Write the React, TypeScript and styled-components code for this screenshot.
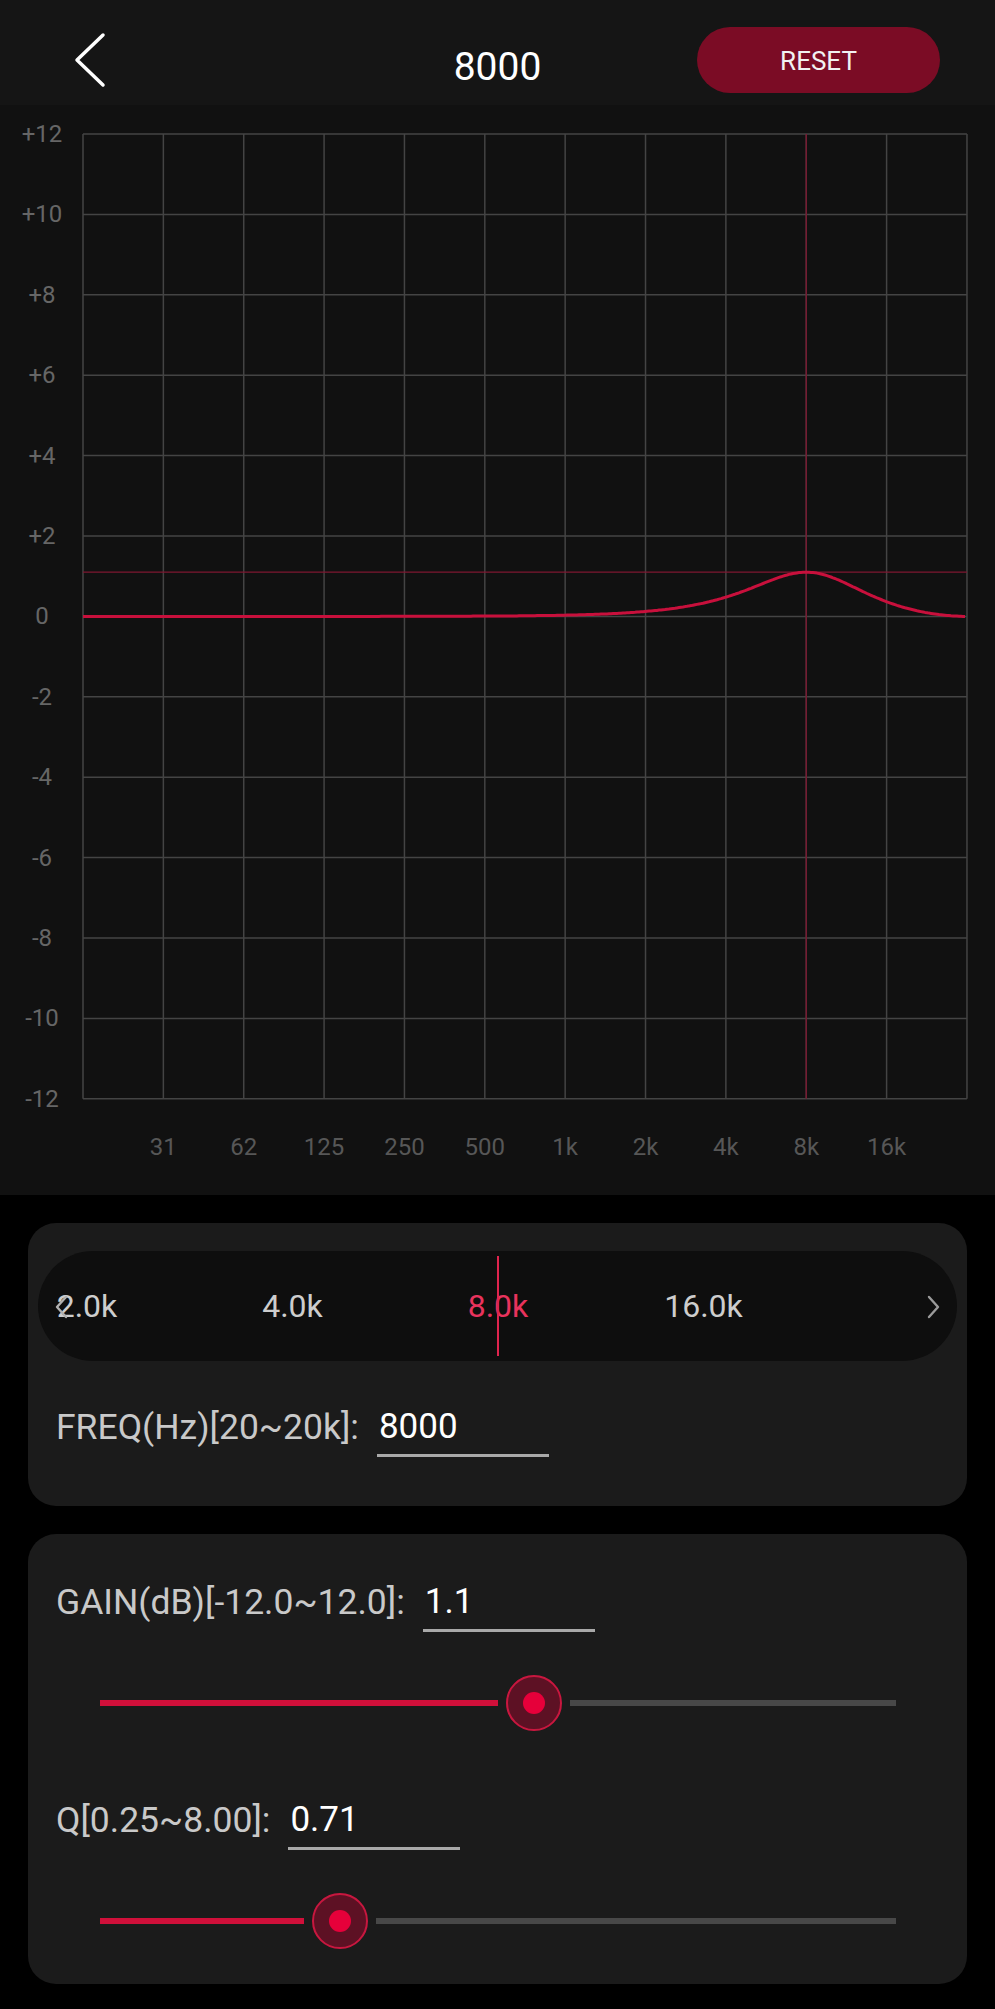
import React from 'react';
import styled, { createGlobalStyle } from 'styled-components';

const GlobalStyle = createGlobalStyle`
  html, body {
    margin: 0;
    padding: 0;
    background: #000;
  }
  body {
    font-family: Roboto, "Noto Sans", "Liberation Sans", sans-serif;
  }
  * {
    box-sizing: border-box;
  }
`;

const Page = styled.div`
  width: 995px;
  min-height: 2009px;
  background: #000;
  display: flex;
  flex-direction: column;
`;

const Header = styled.header`
  height: 105px;
  padding-top: 14px;
  background: #151515;
  display: grid;
  grid-template-columns: 1fr auto 1fr;
  align-items: center;
`;

const BackButton = styled.button`
  justify-self: start;
  margin-left: 70px;
  padding: 0;
  border: 0;
  background: none;
  display: flex;
  cursor: pointer;
`;

const Title = styled.h1`
  margin: 15px 0 0;
  font-size: 39px;
  font-weight: 400;
  color: #fff;
  line-height: 46px;
`;

const ResetButton = styled.button`
  justify-self: end;
  margin-right: 55px;
  width: 243px;
  height: 66px;
  border: 0;
  border-radius: 33px;
  background: #7b0c25;
  color: #f2f2f2;
  font-family: inherit;
  font-size: 26px;
  padding-top: 3px;
  cursor: pointer;
`;

const ChartPanel = styled.section`
  height: 1090px;
  background: #111;
`;

const Content = styled.main`
  display: flex;
  flex-direction: column;
  gap: 28px;
  padding: 28px 28px 0;
`;

const Card = styled.div<{ $pad: string }>`
  background: #1b1b1b;
  border-radius: 28px;
  padding: ${(p) => p.$pad};
`;

const Pill = styled.div`
  position: relative;
  height: 110px;
  margin: 0 -18px;
  border-radius: 55px;
  background: #0e0e0e;
  overflow: hidden;
`;

const Strip = styled.div`
  display: flex;
  align-items: center;
  height: 100%;
`;

const Tick = styled.span<{ $active: boolean }>`
  flex: none;
  width: 205.5px;
  text-align: center;
  font-size: 32px;
  color: ${(p) => (p.$active ? '#e8335d' : '#cdcdcd')};
`;

const Indicator = styled.div`
  position: absolute;
  left: 459px;
  top: 5px;
  bottom: 5px;
  width: 2px;
  background: #e0244e;
`;

const Arrow = styled.svg<{ $side: 'left' | 'right' }>`
  position: absolute;
  top: 44px;
  ${(p) => (p.$side === 'left' ? 'left: 16px;' : 'left: 889px;')}
`;

const FieldRow = styled.div<{ $gap: number }>`
  display: flex;
  align-items: flex-start;
  margin-top: ${(p) => p.$gap}px;
`;

const Label = styled.span`
  font-size: 35.5px;
  line-height: 40px;
  color: #c9c9c9;
  white-space: nowrap;
`;

const ValueBox = styled.span`
  margin-left: 18px;
  width: 172px;
  padding: 0 0 7px 2px;
  border-bottom: 3px solid #a9a9a9;
  font-size: 35px;
  line-height: 40px;
  color: #fff;
`;

const SliderRow = styled.div`
  display: flex;
  align-items: center;
  gap: 8px;
  height: 56px;
  margin: 43px 43px 0 44px;
`;

const ActiveTrack = styled.div`
  flex: none;
  height: 6px;
  background: #d0103a;
`;

const RestTrack = styled.div`
  flex: 1;
  height: 6px;
  background: #484848;
`;

const Thumb = styled.div`
  flex: none;
  width: 56px;
  height: 56px;
  border-radius: 50%;
  background: #5d1124;
  border: 2px solid #c8173f;
  display: grid;
  place-items: center;
`;

const Dot = styled.div`
  width: 22px;
  height: 22px;
  border-radius: 50%;
  background: #e6003a;
`;

// chart geometry (page coordinates)
const LEFT = 83;
const CELL_X = 80.36;
const TOP = 134;
const CELL_Y = 80.4;
const ZERO_Y = TOP + 6 * CELL_Y;

const FREQ = 8000;
const GAIN = 1.1;
const Q = 0.71;

const xOfFreq = (f: number) => LEFT + (Math.log2(f / 31.25) + 1) * CELL_X;
const freqOfX = (x: number) => 31.25 * Math.pow(2, (x - LEFT) / CELL_X - 1);
const yOfDb = (db: number) => ZERO_Y - db * (CELL_Y / 2);

function peakingDb(f: number, f0: number, gain: number, q: number, fs = 64000) {
  const A = Math.pow(10, gain / 40);
  const w0 = (2 * Math.PI * f0) / fs;
  const alpha = Math.sin(w0) / (2 * q);
  const b0 = 1 + alpha * A;
  const b1 = -2 * Math.cos(w0);
  const b2 = 1 - alpha * A;
  const a0 = 1 + alpha / A;
  const a1 = b1;
  const a2 = 1 - alpha / A;
  const w = (2 * Math.PI * Math.min(f, fs / 2)) / fs;
  const c1 = Math.cos(w), s1 = Math.sin(w), c2 = Math.cos(2 * w), s2 = Math.sin(2 * w);
  const nr = b0 + b1 * c1 + b2 * c2;
  const ni = -(b1 * s1 + b2 * s2);
  const dr = a0 + a1 * c1 + a2 * c2;
  const di = -(a1 * s1 + a2 * s2);
  const mag = Math.sqrt((nr * nr + ni * ni) / (dr * dr + di * di));
  return 20 * Math.log10(mag);
}

const yLabels = ['+12', '+10', '+8', '+6', '+4', '+2', '0', '-2', '-4', '-6', '-8', '-10', '-12'];
const xLabels = ['31', '62', '125', '250', '500', '1k', '2k', '4k', '8k', '16k'];

function EqChart() {
  const right = LEFT + 11 * CELL_X;
  const bottom = TOP + 12 * CELL_Y;
  const pts: string[] = [];
  for (let x = LEFT; x <= right + 0.01; x += 2) {
    const db = peakingDb(freqOfX(x), FREQ, GAIN, Q);
    pts.push(`${x.toFixed(1)},${yOfDb(db).toFixed(1)}`);
  }
  const markX = xOfFreq(FREQ);
  const markY = yOfDb(GAIN);
  return (
    <svg width="995" height="1090" viewBox="0 105 995 1090">
      {Array.from({ length: 13 }, (_, i) => (
        <line key={`h${i}`} x1={LEFT} x2={right} y1={TOP + i * CELL_Y} y2={TOP + i * CELL_Y} stroke="#444" strokeWidth="1.5" />
      ))}
      {Array.from({ length: 12 }, (_, i) => (
        <line key={`v${i}`} x1={LEFT + i * CELL_X} x2={LEFT + i * CELL_X} y1={TOP} y2={bottom} stroke="#444" strokeWidth="1.5" />
      ))}
      <line x1={LEFT} x2={right} y1={markY} y2={markY} stroke="#7e1731" strokeWidth="1.3" />
      <line x1={markX} x2={markX} y1={TOP} y2={bottom} stroke="#7e1731" strokeWidth="1.3" />
      <polyline points={pts.join(' ')} fill="none" stroke="#c8103c" strokeWidth="3" strokeLinejoin="round" />
      {yLabels.map((t, i) => (
        <text key={t} x="42" y={TOP + i * CELL_Y} textAnchor="middle" dominantBaseline="central" fontFamily="Roboto, sans-serif" fontSize="24" fill="#666">
          {t}
        </text>
      ))}
      {xLabels.map((t, i) => (
        <text key={t} x={LEFT + (i + 1) * CELL_X} y="1147" textAnchor="middle" dominantBaseline="central" fontFamily="Roboto, sans-serif" fontSize="24" fill="#575757">
          {t}
        </text>
      ))}
    </svg>
  );
}

const ticks = ['2.0k', '4.0k', '8.0k', '16.0k'];
const selected = 2;
const TICK_W = 205.5;

function FreqScroller() {
  const offset = 460 - (selected + 0.5) * TICK_W;
  return (
    <Pill>
      <Strip style={{ transform: `translateX(${offset}px)` }}>
        {ticks.map((t, i) => (
          <Tick key={t} $active={i === selected}>
            {t}
          </Tick>
        ))}
      </Strip>
      <Indicator />
      <Arrow $side="left" width="14" height="24" viewBox="0 0 14 24">
        <path d="M12 2 L3 12 L12 22" fill="none" stroke="#b0b0b0" strokeWidth="2.4" strokeLinecap="round" strokeLinejoin="round" />
      </Arrow>
      <Arrow $side="right" width="14" height="24" viewBox="0 0 14 24">
        <path d="M2 2 L11 12 L2 22" fill="none" stroke="#9a9a9a" strokeWidth="2.4" strokeLinecap="round" strokeLinejoin="round" />
      </Arrow>
    </Pill>
  );
}

function Slider({ fraction }: { fraction: number }) {
  const width = 796;
  return (
    <SliderRow>
      <ActiveTrack style={{ width: fraction * width - 36 }} />
      <Thumb>
        <Dot />
      </Thumb>
      <RestTrack />
    </SliderRow>
  );
}

export default function App() {
  const gainFraction = (GAIN + 12) / 24;
  const qFraction = Math.log(Q / 0.25) / Math.log(8 / 0.25);
  return (
    <Page>
      <GlobalStyle />
      <Header>
        <BackButton aria-label="back">
          <svg width="40" height="56" viewBox="0 0 40 56">
            <path d="M33 3 L7 28 L33 53" fill="none" stroke="#fff" strokeWidth="3.5" strokeLinecap="round" strokeLinejoin="round" />
          </svg>
        </BackButton>
        <Title>{FREQ}</Title>
        <ResetButton>RESET</ResetButton>
      </Header>
      <ChartPanel>
        <EqChart />
      </ChartPanel>
      <Content>
        <Card $pad="28px 28px 49px">
          <FreqScroller />
          <FieldRow $gap={46}>
            <Label>FREQ(Hz)[20~20k]:</Label>
            <ValueBox>{FREQ}</ValueBox>
          </FieldRow>
        </Card>
        <Card $pad="48px 28px 35px">
          <FieldRow $gap={0}>
            <Label>GAIN(dB)[-12.0~12.0]:</Label>
            <ValueBox>{GAIN.toFixed(1)}</ValueBox>
          </FieldRow>
          <Slider fraction={gainFraction} />
          <FieldRow $gap={69}>
            <Label>Q[0.25~8.00]:</Label>
            <ValueBox>{Q.toFixed(2)}</ValueBox>
          </FieldRow>
          <Slider fraction={qFraction} />
        </Card>
      </Content>
    </Page>
  );
}
